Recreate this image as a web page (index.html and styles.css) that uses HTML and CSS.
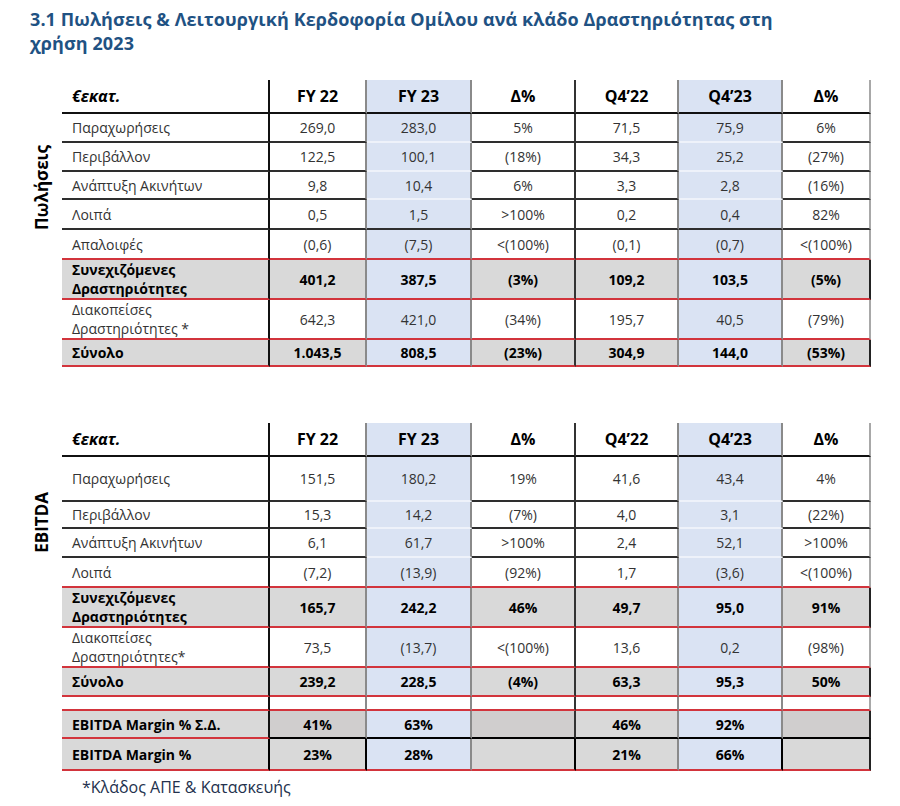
FILE: index.html
```html
<!DOCTYPE html>
<html lang="el">
<head>
<meta charset="utf-8">
<title>Πωλήσεις & Λειτουργική Κερδοφορία</title>
<link rel="stylesheet" href="styles.css">
</head>
<body>
<h1 class="title">3.1 Πωλήσεις &amp; Λειτουργική Κερδοφορία Ομίλου ανά κλάδο Δραστηριότητας στη<br>χρήση 2023</h1>

<table class="fin fin-sales">
  <colgroup>
    <col class="w-side"><col class="w-lab"><col class="w-fy22"><col class="w-fy23"><col class="w-d1"><col class="w-q22"><col class="w-q23"><col class="w-d2">
  </colgroup>
  <tr class="hdr h34">
    <td class="side"></td>
    <td class="lab"><i>€εκατ.</i></td><td class="fy22">FY 22</td><td class="fy23">FY 23</td><td class="d1">Δ%</td><td class="q22">Q4’22</td><td class="q23">Q4’23</td><td class="d2">Δ%</td>
  </tr>
  <tr class="h29">
    <td class="side" rowspan="5"><div class="vert">Πωλήσεις</div></td>
    <td class="lab">Παραχωρήσεις</td><td class="fy22">269,0</td><td class="fy23">283,0</td><td class="d1">5%</td><td class="q22">71,5</td><td class="q23">75,9</td><td class="d2">6%</td>
  </tr>
  <tr class="h29">
    <td class="lab">Περιβάλλον</td><td class="fy22">122,5</td><td class="fy23">100,1</td><td class="d1">(18%)</td><td class="q22">34,3</td><td class="q23">25,2</td><td class="d2">(27%)</td>
  </tr>
  <tr class="h28">
    <td class="lab">Ανάπτυξη Ακινήτων</td><td class="fy22">9,8</td><td class="fy23">10,4</td><td class="d1">6%</td><td class="q22">3,3</td><td class="q23">2,8</td><td class="d2">(16%)</td>
  </tr>
  <tr class="dk h30">
    <td class="lab">Λοιπά</td><td class="fy22">0,5</td><td class="fy23">1,5</td><td class="d1">&gt;100%</td><td class="q22">0,2</td><td class="q23">0,4</td><td class="d2">82%</td>
  </tr>
  <tr class="red h30">
    <td class="lab">Απαλοιφές</td><td class="fy22">(0,6)</td><td class="fy23">(7,5)</td><td class="d1">&lt;(100%)</td><td class="q22">(0,1)</td><td class="q23">(0,7)</td><td class="d2">&lt;(100%)</td>
  </tr>
  <tr class="red tot h40">
    <td class="side" rowspan="3"></td>
    <td class="lab two">Συνεχιζόμενες<br>Δραστηριότητες</td><td class="fy22">401,2</td><td class="fy23">387,5</td><td class="d1">(3%)</td><td class="q22">109,2</td><td class="q23">103,5</td><td class="d2">(5%)</td>
  </tr>
  <tr class="red h40">
    <td class="lab two">Διακοπείσες<br>Δραστηριότητες *</td><td class="fy22">642,3</td><td class="fy23">421,0</td><td class="d1">(34%)</td><td class="q22">195,7</td><td class="q23">40,5</td><td class="d2">(79%)</td>
  </tr>
  <tr class="red tot h27">
    <td class="lab">Σύνολο</td><td class="fy22">1.043,5</td><td class="fy23">808,5</td><td class="d1">(23%)</td><td class="q22">304,9</td><td class="q23">144,0</td><td class="d2">(53%)</td>
  </tr>
</table>

<table class="fin fin-ebitda">
  <colgroup>
    <col class="w-side"><col class="w-lab"><col class="w-fy22"><col class="w-fy23"><col class="w-d1"><col class="w-q22"><col class="w-q23"><col class="w-d2">
  </colgroup>
  <tr class="hdr h34">
    <td class="side"></td>
    <td class="lab"><i>€εκατ.</i></td><td class="fy22">FY 22</td><td class="fy23">FY 23</td><td class="d1">Δ%</td><td class="q22">Q4’22</td><td class="q23">Q4’23</td><td class="d2">Δ%</td>
  </tr>
  <tr class="h45">
    <td class="side" rowspan="4"><div class="vert">EBITDA</div></td>
    <td class="lab">Παραχωρήσεις</td><td class="fy22">151,5</td><td class="fy23">180,2</td><td class="d1">19%</td><td class="q22">41,6</td><td class="q23">43,4</td><td class="d2">4%</td>
  </tr>
  <tr class="h27">
    <td class="lab">Περιβάλλον</td><td class="fy22">15,3</td><td class="fy23">14,2</td><td class="d1">(7%)</td><td class="q22">4,0</td><td class="q23">3,1</td><td class="d2">(22%)</td>
  </tr>
  <tr class="h29">
    <td class="lab">Ανάπτυξη Ακινήτων</td><td class="fy22">6,1</td><td class="fy23">61,7</td><td class="d1">&gt;100%</td><td class="q22">2,4</td><td class="q23">52,1</td><td class="d2">&gt;100%</td>
  </tr>
  <tr class="red h30">
    <td class="lab">Λοιπά</td><td class="fy22">(7,2)</td><td class="fy23">(13,9)</td><td class="d1">(92%)</td><td class="q22">1,7</td><td class="q23">(3,6)</td><td class="d2">&lt;(100%)</td>
  </tr>
  <tr class="red tot h40">
    <td class="side" rowspan="6"></td>
    <td class="lab two">Συνεχιζόμενες<br>Δραστηριότητες</td><td class="fy22">165,7</td><td class="fy23">242,2</td><td class="d1">46%</td><td class="q22">49,7</td><td class="q23">95,0</td><td class="d2">91%</td>
  </tr>
  <tr class="red h40">
    <td class="lab two">Διακοπείσες<br>Δραστηριότητες*</td><td class="fy22">73,5</td><td class="fy23">(13,7)</td><td class="d1">&lt;(100%)</td><td class="q22">13,6</td><td class="q23">0,2</td><td class="d2">(98%)</td>
  </tr>
  <tr class="red tot h29">
    <td class="lab">Σύνολο</td><td class="fy22">239,2</td><td class="fy23">228,5</td><td class="d1">(4%)</td><td class="q22">63,3</td><td class="q23">95,3</td><td class="d2">50%</td>
  </tr>
  <tr class="red blank h14">
    <td class="lab"></td><td class="fy22"></td><td class="fy23"></td><td class="d1"></td><td class="q22"></td><td class="q23"></td><td class="d2"></td>
  </tr>
  <tr class="tot margin-sd h28">
    <td class="lab">EBITDA Margin % Σ.Δ.</td><td class="fy22">41%</td><td class="fy23">63%</td><td class="d1"></td><td class="q22">46%</td><td class="q23">92%</td><td class="d2"></td>
  </tr>
  <tr class="red tot margin h32">
    <td class="lab">EBITDA Margin %</td><td class="fy22">23%</td><td class="fy23">28%</td><td class="d1"></td><td class="q22">21%</td><td class="q23">66%</td><td class="d2"></td>
  </tr>
</table>

<p class="note">*Κλάδος ΑΠΕ &amp; Κατασκευής</p>
</body>
</html>
```

FILE: styles.css
```css
* { box-sizing: border-box; }

body {
  margin: 0;
  background: #ffffff;
  font-family: "Open Sans", "Noto Sans", sans-serif;
  color: #333333;
}

.title {
  margin: 0;
  padding: 7px 0 0 30px;
  font-size: 18px;
  line-height: 24px;
  font-weight: 700;
  letter-spacing: 0.1px;
  color: #1f5283;
}

.fin {
  border-collapse: separate;
  border-spacing: 0;
  table-layout: fixed;
  width: 871px;
  margin-top: 25px;
  font-size: 14px;
}

.fin-ebitda { margin-top: 56px; }

.w-side { width: 62px; }
.w-lab { width: 208px; }
.w-fy22 { width: 97px; }
.w-fy23 { width: 105px; }
.w-d1 { width: 104px; }
.w-q22 { width: 103px; }
.w-q23 { width: 104px; }
.w-d2 { width: 88px; }

.h14 { height: 14px; }
.h27 { height: 27px; }
.h28 { height: 28px; }
.h29 { height: 29px; }
.h30 { height: 30px; }
.h32 { height: 32px; }
.h34 { height: 34px; }
.h40 { height: 40px; }
.h45 { height: 45px; }

.fin td {
  padding: 0;
  text-align: center;
  vertical-align: middle;
  line-height: 19px;
  border-bottom: 2px solid #2e2e2e;
  border-right: 2px solid #8a8a8a;
  white-space: nowrap;
}

.fin td.side,
.fin .tot td.side {
  border: none;
  background: transparent;
  text-align: left;
  padding-left: 33px;
}

.vert {
  writing-mode: vertical-rl;
  transform: rotate(180deg);
  font-size: 17px;
  line-height: 18px;
  font-weight: 700;
  color: #000;
}

.fin td.lab {
  text-align: left;
  padding-left: 10px;
  border-right-color: #111;
}

.fin td.fy23,
.fin td.q23 {
  background: #dae3f3;
  border-bottom-color: #eef2fa;
}

.fin td.d1 { border-right-color: #333; }
.fin td.d2 { border-right-color: #a8a8a8; }

/* header */
.hdr td {
  font-size: 16px;
  font-weight: 700;
  color: #000;
}
.fin .hdr td,
.fin .hdr td.fy23,
.fin .hdr td.q23 {
  border-bottom-color: #111;
}

.fin .dk td,
.fin .dk td.fy23,
.fin .dk td.q23 {
  border-bottom-color: #2e2e2e;
}

.fin .red td,
.fin .red td.fy23,
.fin .red td.q23 {
  border-bottom-color: #d2343c;
}

/* grey bold rows */
.tot td {
  background: #d9d9d9;
  font-weight: 700;
  color: #000;
}
.fin .tot td.d2 { border-right-color: #222; }

.fin .blank td.fy23,
.fin .blank td.q23 {
  background: #fff;
}

.fin .margin-sd td.fy22,
.fin .margin-sd td.d1,
.fin .margin-sd td.d2 {
  background: #d0cece;
}
.fin .margin-sd td {
  border-bottom-color: #000;
}
.fin .margin-sd td.lab {
  border-bottom-color: #d2343c;
}

.fin .margin td.lab,
.fin .margin td.fy22,
.fin .margin td.d1,
.fin .margin td.q23 {
  border-right-color: #000;
}
.fin .margin td.d2 { border-right-color: #222; }

.note {
  margin: 6px 0 0 82px;
  font-size: 16px;
  line-height: 20px;
  color: #23314d;
}
```
